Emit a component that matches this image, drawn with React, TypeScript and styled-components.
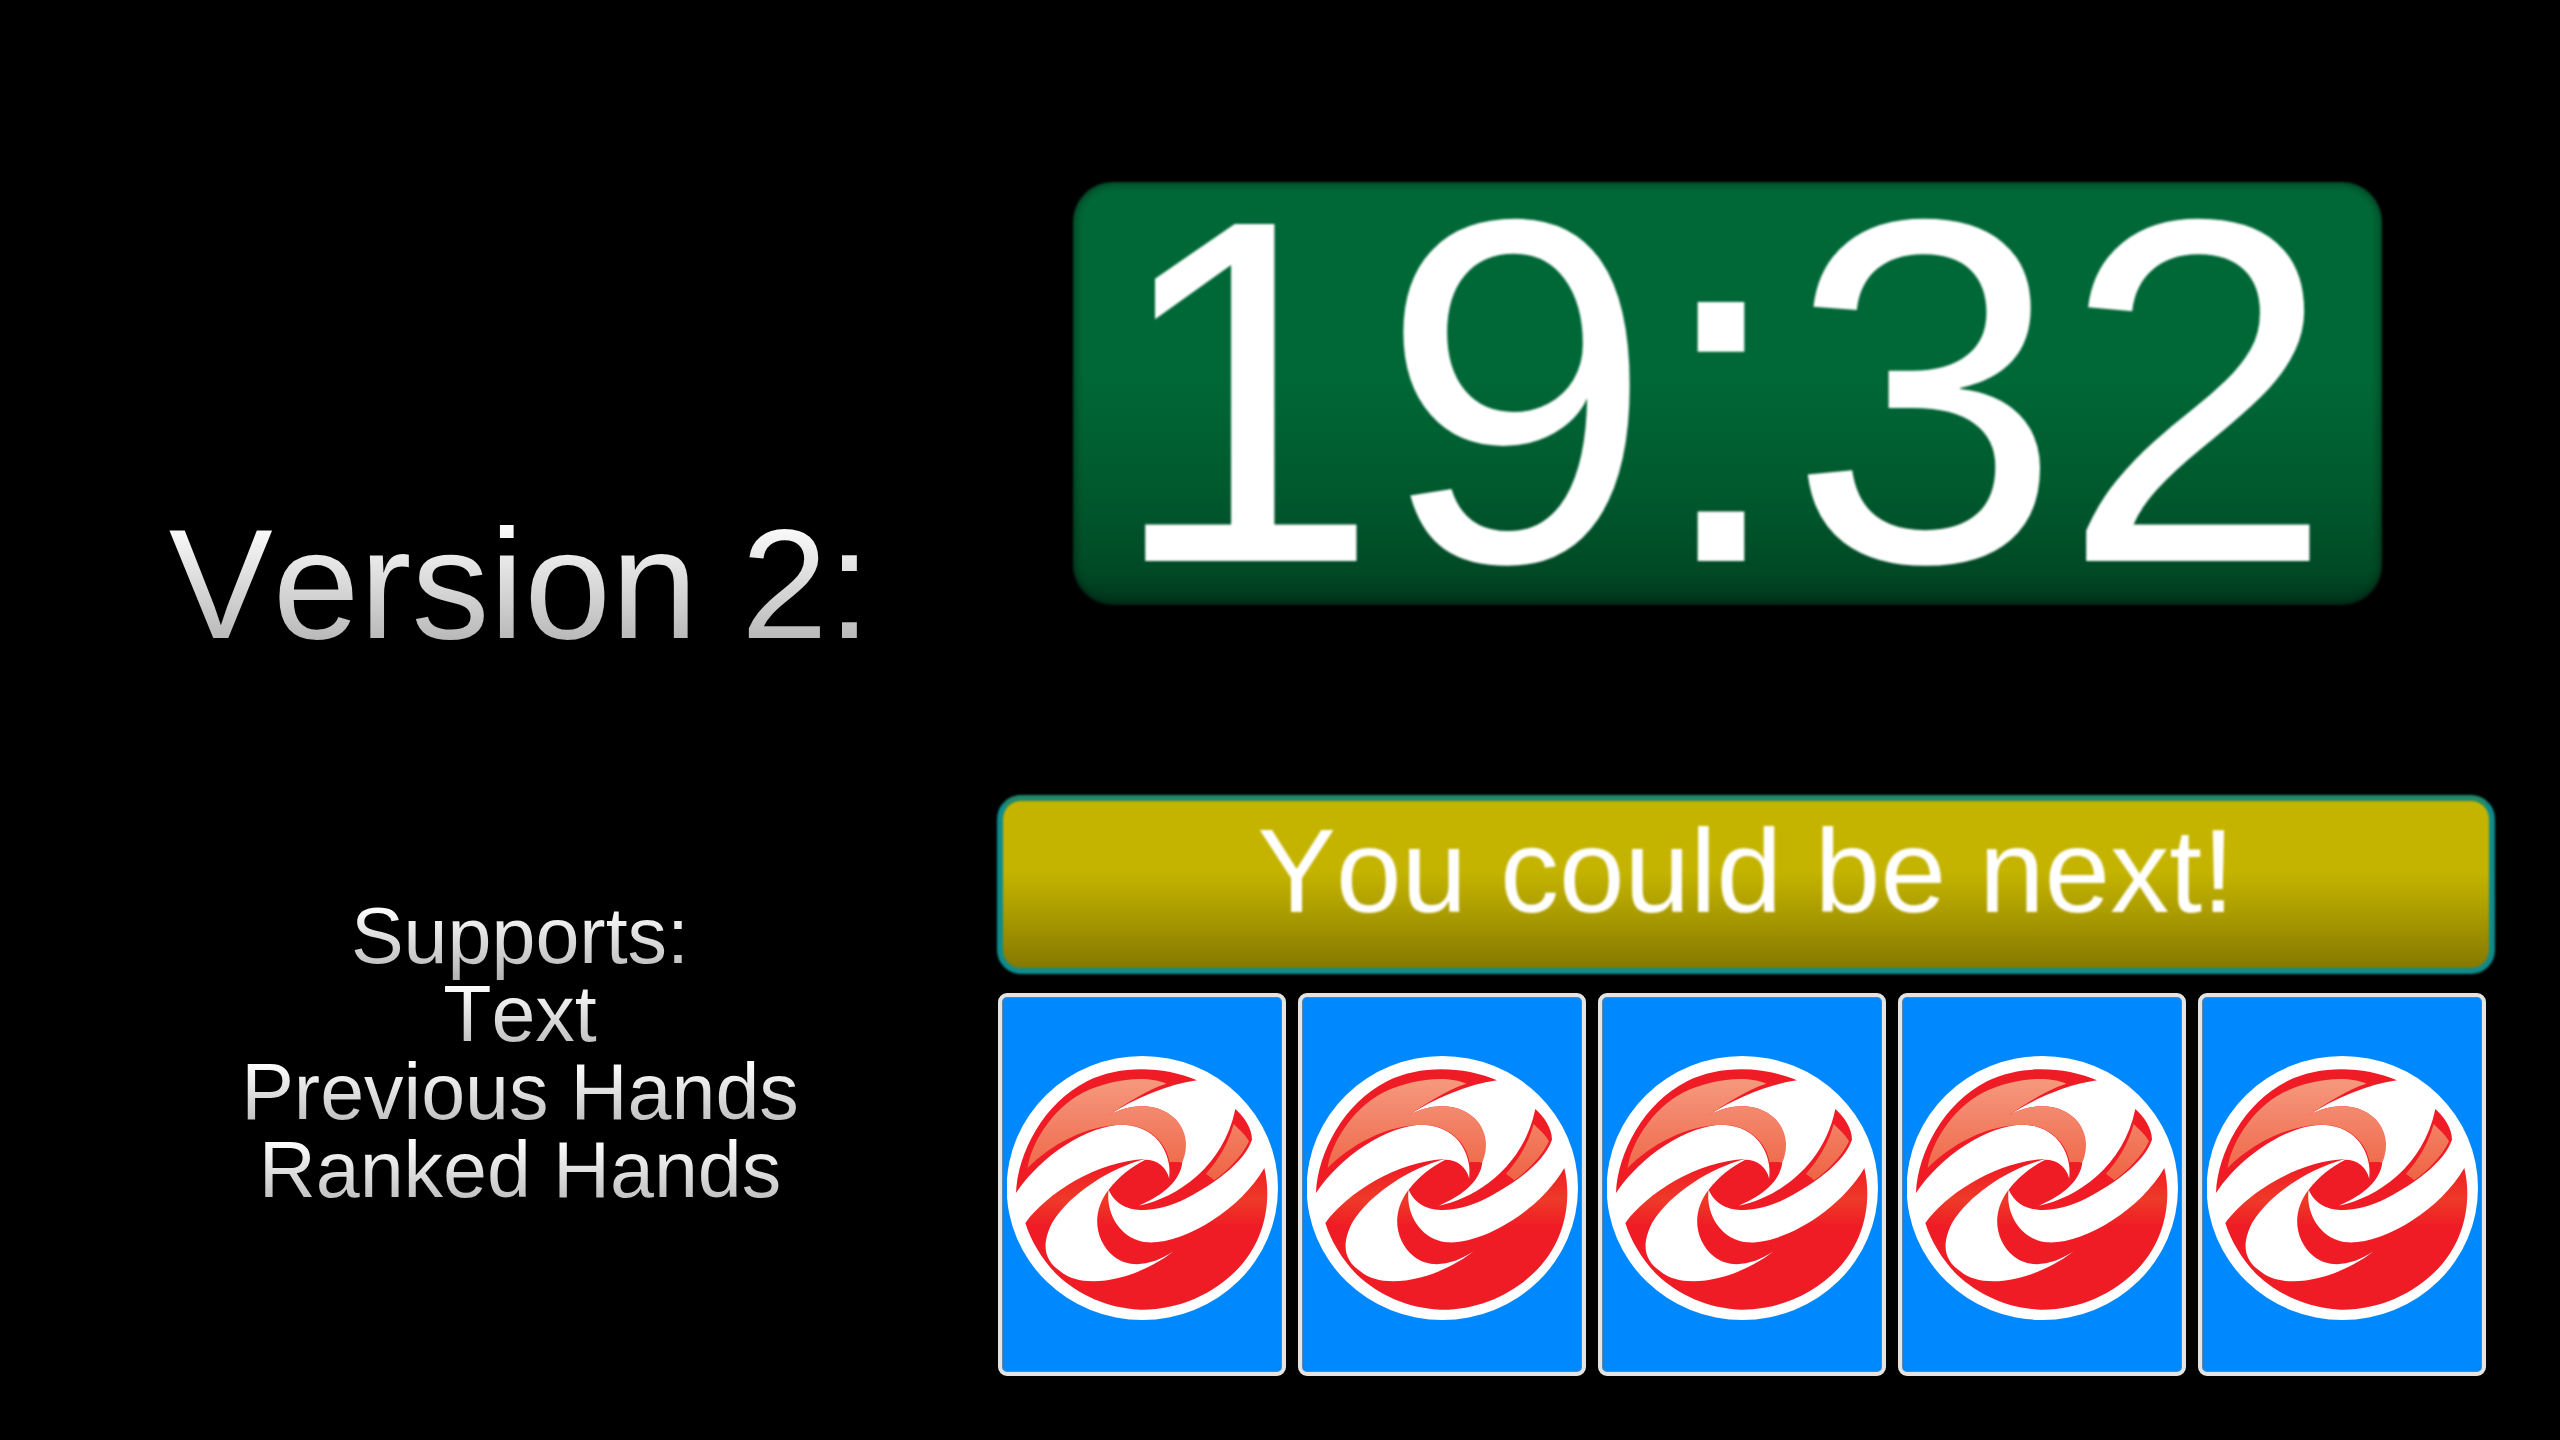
import React from 'react';
import styled, { createGlobalStyle } from 'styled-components';

const GlobalStyle = createGlobalStyle`
  html, body {
    margin: 0;
    padding: 0;
    background: #000;
    font-family: "Liberation Sans", Arial, sans-serif;
    font-kerning: none;
  }
`;

const Page = styled.div`
  display: flex;
  width: 2560px;
  height: 1440px;
  overflow: hidden;
  background: #000;
`;

// Left column: heading and feature list
const InfoColumn = styled.div`
  display: flex;
  flex-direction: column;
  align-items: center;
  box-sizing: border-box;
  width: 997px;
  padding: 504px 0 0 43px;
`;

const GradientLine = styled.span`
  display: block;
  white-space: nowrap;
  text-align: center;
  background: linear-gradient(#ffffff 10%, #b4b4b4 90%);
  -webkit-background-clip: text;
  background-clip: text;
  color: transparent;
`;

const Title = styled(GradientLine)`
  font-size: 156px;
  line-height: 160px;
`;

const FeatureList = styled.div`
  display: flex;
  flex-direction: column;
  align-items: center;
  margin-top: 233px;
`;

// extra bottom padding keeps descenders inside the clipped gradient
const Feature = styled(GradientLine)`
  padding-bottom: 12px;
  margin-bottom: -12px;
  font-size: 79px;
  line-height: 78px;
`;

// Right column: clock, banner, card row
const GameColumn = styled.div`
  display: flex;
  flex-direction: column;
  width: 1498px;
  padding-top: 182px;
`;

const Clock = styled.div`
  box-sizing: border-box;
  width: 1309px;
  height: 423px;
  margin-left: 76px;
  padding-right: 13px;
  border-radius: 40px;
  background: linear-gradient(#006837 0%, #006837 45%, #005a2e 72%, #004a25 92%, #02351c 100%);
  box-shadow: inset 0 0 8px 1px rgba(0, 0, 0, 0.5);
  filter: blur(0.8px);
  color: #fff;
  font-size: 490px;
  line-height: 418px;
  text-align: center;
  white-space: nowrap;
`;

const Banner = styled.div`
  box-sizing: border-box;
  height: 179px;
  margin-top: 190px;
  padding-top: 11px;
  border: 6px solid #0f8b8c;
  border-top-color: #21896b;
  border-radius: 24px;
  background: linear-gradient(#c4b400 0%, #c4b400 42%, #ad9e00 65%, #857800 100%);
  filter: blur(0.8px);
  color: #fff;
  font-size: 118px;
  line-height: 118px;
  text-align: center;
  white-space: nowrap;
`;

const CardRow = styled.div`
  display: flex;
  gap: 12px;
  margin: 19px 0 0 1px;
`;

const Card = styled.div`
  display: flex;
  align-items: center;
  justify-content: center;
  box-sizing: border-box;
  width: 288px;
  height: 383px;
  padding-top: 8px;
  border: 4px solid #e4e4e4;
  border-radius: 9px;
  background: #0088ff;
  box-shadow: inset 0 0 0 1px #5f86a8;
  filter: blur(0.5px);
`;

const LogoMark = styled.svg`
  flex: none;
  width: 271px;
  height: 271px;
`;

const Logo: React.FC = () => (
  <LogoMark viewBox="0 0 813 813">
    <defs>
      <linearGradient id="salmon" gradientUnits="userSpaceOnUse" x1="0" y1="70" x2="0" y2="400">
        <stop offset="0" stopColor="#f69a80" />
        <stop offset="1" stopColor="#ee6040" />
      </linearGradient>
      <linearGradient id="redLobe" gradientUnits="userSpaceOnUse" x1="0" y1="340" x2="0" y2="520">
        <stop offset="0" stopColor="#ef1c25" />
        <stop offset="0.55" stopColor="#ee3a28" />
        <stop offset="1" stopColor="#ef1c25" />
      </linearGradient>
    </defs>
    <ellipse cx="406" cy="405" rx="407" ry="396" fill="#fff" />
    {/* upper left crescent, red rim */}
    <path
      fill="#ef1c25"
      d="M27 420 C32 300 110 150 240 85 C340 35 470 40 570 82 C480 95 385 135 305 187 C380 145 470 150 515 210 C550 260 530 335 487 378 C495 320 465 222 350 215 C240 215 100 310 27 420 Z"
    />
    {/* upper left crescent, salmon body and inner swirl */}
    <path
      fill="url(#salmon)"
      d="M62 345 C70 280 130 170 230 118 C310 78 420 65 478 92 C420 110 360 150 305 187 C380 145 470 150 515 210 C545 250 540 295 526 328 L488 328 C478 270 430 218 350 215 C240 215 130 275 62 345 Z"
    />
    {/* swirl centre running into the right crescent */}
    <path
      fill="#ef1c25"
      d="M305 410 C335 370 375 340 415 320 C450 320 478 340 487 378 L490 328 L526 328 C520 380 475 425 395 458 C510 435 650 340 685 168 C710 190 735 225 735 260 C710 330 620 395 520 445 C440 480 340 490 305 410 Z"
    />
    <path
      fill="url(#salmon)"
      d="M680 213 C697 230 715 245 726 265 C705 310 665 350 622 382 L597 362 C635 320 665 270 680 213 Z"
    />
    {/* lower band and big lobe */}
    <path
      fill="url(#redLobe)"
      d="M772 345 C795 440 775 560 695 645 C620 725 510 772 400 770 C300 765 215 725 150 665 C105 620 70 560 55 510 C120 420 270 325 415 318 C310 345 190 420 135 510 C100 580 115 625 160 655 C230 715 390 680 500 595 C440 635 370 650 320 610 C265 565 250 480 305 410 C295 480 340 560 420 568 C530 575 700 470 772 345 Z"
    />
  </LogoMark>
);

const features = ['Supports:', 'Text', 'Previous Hands', 'Ranked Hands'];
const cards = [0, 1, 2, 3, 4];

const App: React.FC = () => (
  <Page>
    <GlobalStyle />
    <InfoColumn>
      <Title>Version 2:</Title>
      <FeatureList>
        {features.map(f => (
          <Feature key={f}>{f}</Feature>
        ))}
      </FeatureList>
    </InfoColumn>
    <GameColumn>
      <Clock>19:32</Clock>
      <Banner>You could be next!</Banner>
      <CardRow>
        {cards.map(c => (
          <Card key={c}>
            <Logo />
          </Card>
        ))}
      </CardRow>
    </GameColumn>
  </Page>
);

export default App;
